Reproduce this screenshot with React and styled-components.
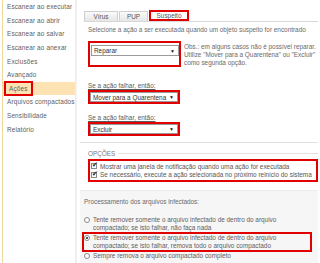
import React from 'react'
import styled, { createGlobalStyle } from 'styled-components'

const Global = createGlobalStyle`
  html, body {
    margin: 0;
    padding: 0;
    background: #fff;
  }
  body {
    width: 320px;
    height: 263px;
    overflow: hidden;
    font-family: 'Liberation Sans', Arial, sans-serif;
    font-size: 6.4px;
    color: #6a6a6a;
  }
`

const Page = styled.div`
  display: flex;
  width: 320px;
  height: 263px;
`

const Sidebar = styled.nav`
  width: 74px;
  margin-left: 2px;
  border-left: 1px solid #f0d79e;
  border-right: 1px solid #ececec;
  display: flex;
  flex-direction: column;
`

const NavItem = styled.div`
  height: 13.6px;
  display: flex;
  align-items: center;
  padding-left: 4px;
  letter-spacing: 0.15px;
  color: #5e5e5e;
  background: ${p => (p.$active ? '#fde3b4' : 'transparent')};
`

const Mark = styled.span`
  display: inline-block;
  border: 2px solid #e00000;
  box-sizing: border-box;
`

const NavMark = styled(Mark)`
  margin-left: -3px;
  padding: 2px 3px;
`

const Main = styled.main`
  flex: 1;
  padding: 10px 2px 0 7px;
  display: flex;
  flex-direction: column;
  border-left: 1px solid #f2f2f2;
`

const Tabs = styled.div`
  display: flex;
  align-items: flex-end;
  height: 11px;
  border-bottom: 1px solid #d8d8d8;
`

const Tab = styled.div`
  width: ${p => p.$w}px;
  height: 10px;
  margin-right: 1px;
  box-sizing: border-box;
  display: flex;
  align-items: center;
  justify-content: center;
  border: 1px solid #cfcfcf;
  border-bottom: none;
  background: linear-gradient(#fafafa, #e6e6e6);
  color: #555;
`

const ActiveTab = styled(Mark)`
  width: 40px;
  height: 11px;
  display: flex;
  align-items: center;
  justify-content: center;
  background: #fff;
  color: #555;
`

const Body = styled.div`
  padding-left: 4px;
  display: flex;
  flex-direction: column;
`

const Text = styled.div`
  margin-top: ${p => p.$mt || 0}px;
  line-height: 8px;
  white-space: nowrap;
`

const Label = styled(Text)`
  text-decoration: underline;
  color: #5a5a5a;
`

const Row = styled.div`
  display: flex;
  gap: 3px;
  margin-top: ${p => p.$mt || 0}px;
`

const SelectMark = styled(Mark)`
  padding: ${p => (p.$tall ? '2px 0 3px 1px' : '0')};
`

const SelectBox = styled.div`
  width: 88px;
  height: ${p => (p.$tall ? 11 : 10)}px;
  box-sizing: border-box;
  border: 1px solid #9a9a9a;
  background: #fff;
  display: flex;
  align-items: center;
  justify-content: space-between;
  padding: 0 3px 0 2px;
  color: #333;
`

const Arrow = styled.span`
  font-size: 5px;
  color: #222;
`

const Note = styled.div`
  line-height: 8px;
  padding-top: 2px;
  white-space: nowrap;
`

const Rule = styled.div`
  height: 1px;
  background: #e2e2e2;
  margin: 6px 0 0 -4px;
`

const Section = styled.div`
  display: flex;
  align-items: center;
  gap: 3px;
  margin-top: 7px;
  color: #777;
  &::after {
    content: '';
    flex: 1;
    height: 1px;
    background: #e2e2e2;
  }
`

const OptionList = styled(Mark)`
  margin-top: 2px;
  padding: 1px 0 1px 1px;
  display: flex;
  flex-direction: column;
  width: 230px;
`

const Check = styled.div`
  display: flex;
  align-items: center;
  gap: 3px;
  height: 8.5px;
  white-space: nowrap;
  color: #555;
`

const Box = styled.span`
  width: 6px;
  height: 6px;
  box-sizing: border-box;
  border: 1px solid #888;
  background: #fff;
  position: relative;
  flex: none;
  &::after {
    content: '✔';
    position: absolute;
    left: 0;
    top: -3px;
    font-size: 7px;
    color: #222;
  }
`

const Panel = styled.div`
  margin-top: 8px;
  margin-left: -4px;
  padding: 7px 0 0 4px;
  background: #f6f6f6;
  border-top: 1px solid #ececec;
  flex: 1;
  display: flex;
  flex-direction: column;
`

const Radio = styled.div`
  display: flex;
  gap: 3px;
  line-height: 8px;
  white-space: nowrap;
  color: #5e5e5e;
  margin-top: ${p => p.$mt || 0}px;
`

const Dot = styled.span`
  width: 6px;
  height: 6px;
  margin-top: 1px;
  box-sizing: border-box;
  border-radius: 50%;
  border: 1px solid #8a8a8a;
  background: #fff;
  flex: none;
  display: flex;
  align-items: center;
  justify-content: center;
  &::after {
    content: '';
    width: 2px;
    height: 2px;
    border-radius: 50%;
    background: ${p => (p.$on ? '#222' : 'transparent')};
  }
`

const RadioMark = styled(Mark)`
  width: 230px;
  margin-left: -2px;
`

const navItems = [
  'Escanear ao executar',
  'Escanear ao abrir',
  'Escanear ao salvar',
  'Escanear ao anexar',
  'Exclusões',
  'Avançado',
  'Ações',
  'Arquivos compactados',
  'Sensibilidade',
  'Relatório',
]

export default function App() {
  return (
    <Page>
      <Global />
      <Sidebar>
        {navItems.map(n =>
          n === 'Ações' ? (
            <NavItem key={n} $active>
              <NavMark>{n}</NavMark>
            </NavItem>
          ) : (
            <NavItem key={n}>{n}</NavItem>
          )
        )}
      </Sidebar>
      <Main>
        <Tabs>
          <Tab $w={34}>Vírus</Tab>
          <Tab $w={29}>PUP</Tab>
          <ActiveTab>Suspeito</ActiveTab>
        </Tabs>
        <Body>
          <Text $mt={4}>Selecione a ação a ser executada quando um objeto suspeito for encontrado</Text>
          <Row $mt={7}>
            <SelectMark $tall>
              <SelectBox $tall>
                Reparar<Arrow>▼</Arrow>
              </SelectBox>
            </SelectMark>
            <Note>
              Obs.: em alguns casos não é possível reparar.
              <br />
              Utilize "Mover para a Quarentena" ou "Excluir"
              <br />
              como segunda opção.
            </Note>
          </Row>
          <Label $mt={15}>Se a ação falhar, então:</Label>
          <Row>
            <SelectMark>
              <SelectBox>
                Mover para a Quarentena<Arrow>▼</Arrow>
              </SelectBox>
            </SelectMark>
          </Row>
          <Label $mt={10}>Se a ação falhar, então:</Label>
          <Row>
            <SelectMark>
              <SelectBox>
                Excluir<Arrow>▼</Arrow>
              </SelectBox>
            </SelectMark>
          </Row>
        </Body>
        <Rule />
        <Body>
          <Section>OPÇÕES</Section>
          <OptionList>
            <Check>
              <Box />
              Mostrar uma janela de notificação quando uma ação for executada
            </Check>
            <Check>
              <Box />
              Se necessário, execute a ação selecionada no próximo reinício do sistema
            </Check>
          </OptionList>
        </Body>
        <Panel>
          <Text>Processamento dos arquivos infectados:</Text>
          <Radio $mt={10}>
            <Dot />
            <div>
              Tente remover somente o arquivo infectado de dentro do arquivo
              <br />
              compactado; se isto falhar, não faça nada
            </div>
          </Radio>
          <RadioMark>
            <Radio>
              <Dot $on />
              <div>
                Tente remover somente o arquivo infectado de dentro do arquivo
                <br />
                compactado; se isto falhar, remova todo o arquivo compactado
              </div>
            </Radio>
          </RadioMark>
          <Radio>
            <Dot />
            <div>Sempre remova o arquivo compactado completo</div>
          </Radio>
        </Panel>
      </Main>
    </Page>
  )
}
